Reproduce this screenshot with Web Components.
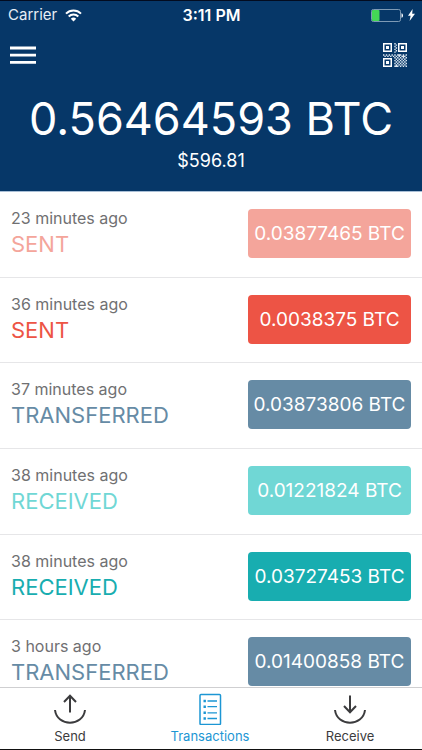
<!DOCTYPE html>
<html lang="en">
<head>
<meta charset="utf-8">
<meta name="viewport" content="width=device-width, initial-scale=1">
<title>Wallet</title>
<style>
  html, body { height: 100%; margin: 0; }
  body { background: #fff; font-family: Inter, "Liberation Sans", sans-serif; color: #3b3b3d; }
</style>
</head>
<body>
<wallet-app>
  <status-bar slot="top" carrier="Carrier" time="3:11 PM"></status-bar>
  <balance-header slot="top">
    <span slot="amount">0.56464593 BTC</span>
    <span slot="fiat">$596.81</span>
  </balance-header>
  <tx-row kind="sent" pending><span slot="when">23 minutes ago</span><span slot="label">SENT</span>0.03877465 BTC</tx-row>
  <tx-row kind="sent"><span slot="when">36 minutes ago</span><span slot="label">SENT</span>0.0038375 BTC</tx-row>
  <tx-row kind="transferred"><span slot="when">37 minutes ago</span><span slot="label">TRANSFERRED</span>0.03873806 BTC</tx-row>
  <tx-row kind="received" pending><span slot="when">38 minutes ago</span><span slot="label">RECEIVED</span>0.01221824 BTC</tx-row>
  <tx-row kind="received"><span slot="when">38 minutes ago</span><span slot="label">RECEIVED</span>0.03727453 BTC</tx-row>
  <tx-row kind="transferred"><span slot="when">3 hours ago</span><span slot="label">TRANSFERRED</span>0.01400858 BTC</tx-row>
  <tab-bar slot="bottom">
    <tab-item icon="send">Send</tab-item>
    <tab-item icon="list" active>Transactions</tab-item>
    <tab-item icon="receive">Receive</tab-item>
  </tab-bar>
</wallet-app>

<script>
const define = (name, render) => customElements.define(name, class extends HTMLElement {
  constructor() { super(); this.attachShadow({ mode: "open" }); }
  connectedCallback() { this.shadowRoot.innerHTML = render(this); }
});

define("wallet-app", () => `
  <style>
    :host { display: flex; flex-direction: column; height: 100vh; box-sizing: border-box;
      border-top: 1px solid #020b1f; border-bottom: 1px solid #111; }
    header, footer { flex: none; }
    main { flex: 1; min-height: 0; display: grid; grid-auto-rows: 86px 85px 86px; overflow-y: auto; scrollbar-width: none; }
  </style>
  <header><slot name="top"></slot></header>
  <main><slot></slot></main>
  <footer><slot name="bottom"></slot></footer>`);

define("status-bar", el => `
  <style>
    :host { display: grid; grid-template-columns: 1fr auto 1fr; align-items: center; height: 28px;
      padding: 0 7px 0 8px; background: #063768; color: #fff; font-size: 16px; line-height: 20px; }
    .side { display: flex; align-items: center; gap: 8px; color: #e6eef6; font-size: 15px; }
    .end { justify-content: flex-end; gap: 5px; }
    .time { font-weight: 600; }
    svg { display: block; }
  </style>
  <div class="side"><span>${el.getAttribute("carrier")}</span>
    <svg width="17" height="13" viewBox="0 0 17 13" fill="none" stroke="#fff" stroke-width="2" aria-hidden="true">
      <path d="M1 4.6a10.6 10.6 0 0 1 15 0M3.7 7.5a6.8 6.8 0 0 1 9.6 0"/>
      <path d="M8.5 12.6 5.8 9.8a3.9 3.9 0 0 1 5.4 0z" fill="#fff" stroke="none"/>
    </svg></div>
  <span class="time">${el.getAttribute("time")}</span>
  <div class="side end">
    <svg width="32" height="13" viewBox="0 0 32 13" aria-label="Battery" role="img">
      <rect x=".5" y=".5" width="29" height="12" rx="1.8" fill="none" stroke="#7e9ab5"/>
      <rect x="1" y="1" width="7.5" height="11" rx="1" fill="#44d656"/>
      <path d="M30.5 4.200c2 .6 2 4 0 4.600z" fill="#fff"/>
    </svg>
    <svg width="7" height="12" viewBox="0 0 7 12" aria-hidden="true"><path d="M4.600 0 0 6.800h2.600L1.600 12 7 4.800H4.200z" fill="#fff"/></svg>
  </div>`);

/* QR data modules on a 17-cell grid: a checkered lattice beside the three finder squares. */
const modules = (() => {
  let d = "";
  for (let y = 0; y < 17; y++) for (let x = 0; x < 17; x++) {
    const strip = x > 7 && x < 10 && y < 7;
    const band = y > 7 && y < 10 && x < 8;
    const field = x > 7 && y > 7;
    const extra = (x * 7 + y * 5) % 13 === 0;
    if ((strip || band || field) && ((x + y) % 2 === 0 || extra)) d += `M${x} ${y}h1v1h-1z`;
  }
  return d;
})();

define("balance-header", () => `
  <style>
    :host { display: block; background: #063768; color: #fff; text-align: center;
      border-bottom: 1px solid #a9bfd6; padding-bottom: 18px; }
    nav { display: flex; justify-content: space-between; align-items: center; height: 52px; padding: 0 15px 0 10px; }
    button { display: block; padding: 0; border: 0; background: none; color: inherit; cursor: pointer; }
    svg { display: block; }
    .amount { padding-top: 8px; font-size: 45px; line-height: 60px; white-space: nowrap; }
    .fiat { font-size: 18px; line-height: 24px; }
    h1, p { margin: 0; font-weight: 400; }
  </style>
  <nav>
    <button aria-label="Menu"><svg width="26" height="18" viewBox="0 0 26 18"><path d="M0 2h26M0 9.200h26M0 16.400h26" stroke="#fff" stroke-width="2.800"/></svg></button>
    <button aria-label="Scan QR code"><svg width="24" height="24" viewBox="0 0 24 24">
      <path fill="none" stroke="#fff" stroke-width="1.500" d="M.75.75h7.500v7.500h-7.500zM15.750.75h7.500v7.500h-7.500zM.75 15.750h7.500v7.500h-7.500z"/>
      <path fill="#fff" d="M3 3h3v3h-3zM18 3h3v3h-3zM3 18h3v3h-3z"/>
      <path fill="#dfe9f2" transform="scale(1.41)" d="${modules}"/></svg></button>
  </nav>
  <h1 class="amount"><slot name="amount"></slot></h1>
  <p class="fiat"><slot name="fiat"></slot></p>`);

define("tx-row", () => `
  <style>
    :host { --tone: #668ba5; display: flex; justify-content: space-between; align-items: flex-start;
      box-sizing: border-box; padding: 17px 11px 0; border-bottom: 1px solid #e6e6e8; background: #fff; }
    :host([kind="sent"]) { --tone: #ed5445; }
    :host([kind="sent"][pending]) { --tone: #f4a59b; }
    :host([kind="received"]) { --tone: #18adb0; }
    :host([kind="received"][pending]) { --tone: #70d7d5; }
    .when { font-size: 16px; line-height: 18px; color: #707072; }
    .label { font-size: 22px; line-height: 34px; color: var(--tone); }
    button { width: 163px; height: 49px; padding: 0; border: 0; border-radius: 4px; background: var(--tone);
      color: #fff; font: 400 19px/24px Inter, "Liberation Sans", sans-serif; white-space: nowrap; cursor: pointer; }
  </style>
  <div><div class="when"><slot name="when"></slot></div><div class="label"><slot name="label"></slot></div></div>
  <button><slot></slot></button>`);

define("tab-bar", () => `
  <style>
    :host { display: grid; grid-template-columns: repeat(3, 1fr); height: 61px; padding-right: 2px;
      border-top: 1px solid #cfcfd1; background: #fff; }
  </style>
  <slot></slot>`);

const icons = {
  send: `<path d="M1 17C3 34 29 34 31 17M16 19.500V3M10 9l6-6.300L22 9"/>`,
  receive: `<path d="M1 17C3 34 29 34 31 17M16 2.500V19M10 13l6 6.300L22 13"/>`,
  list: `<rect x="6" y="1.500" width="20.500" height="30" rx="1" stroke-width="1.500"/>
    <path d="M13.500 8h9.500M13.500 13.700h9.500M13.500 19.800h9.500M13.500 25.500h9.500" stroke-width="1.300"/>
    <path d="M9.500 8h2.400M9.500 13.700h2.400M9.500 19.800h2.400M9.500 25.500h2.400" stroke-width="2.400"/>`
};

define("tab-item", el => `
  <style>
    :host { display: block; color: #3b3b3d; }
    :host([active]) { color: #1c96d4; }
    button { display: flex; flex-direction: column; align-items: center; width: 100%; padding: 5px 0 0; border: 0;
      background: none; color: inherit; font: 400 13px/18px Inter, "Liberation Sans", sans-serif; cursor: pointer; }
    svg { display: block; margin-bottom: 2px; }
  </style>
  <button ${el.hasAttribute("active") ? 'aria-current="page"' : ""}>
    <svg width="32" height="32" viewBox="0 0 32 32" fill="none" stroke="currentColor" stroke-width="2" aria-hidden="true">${icons[el.getAttribute("icon")]}</svg>
    <span><slot></slot></span>
  </button>`);
</script>
</body>
</html>
